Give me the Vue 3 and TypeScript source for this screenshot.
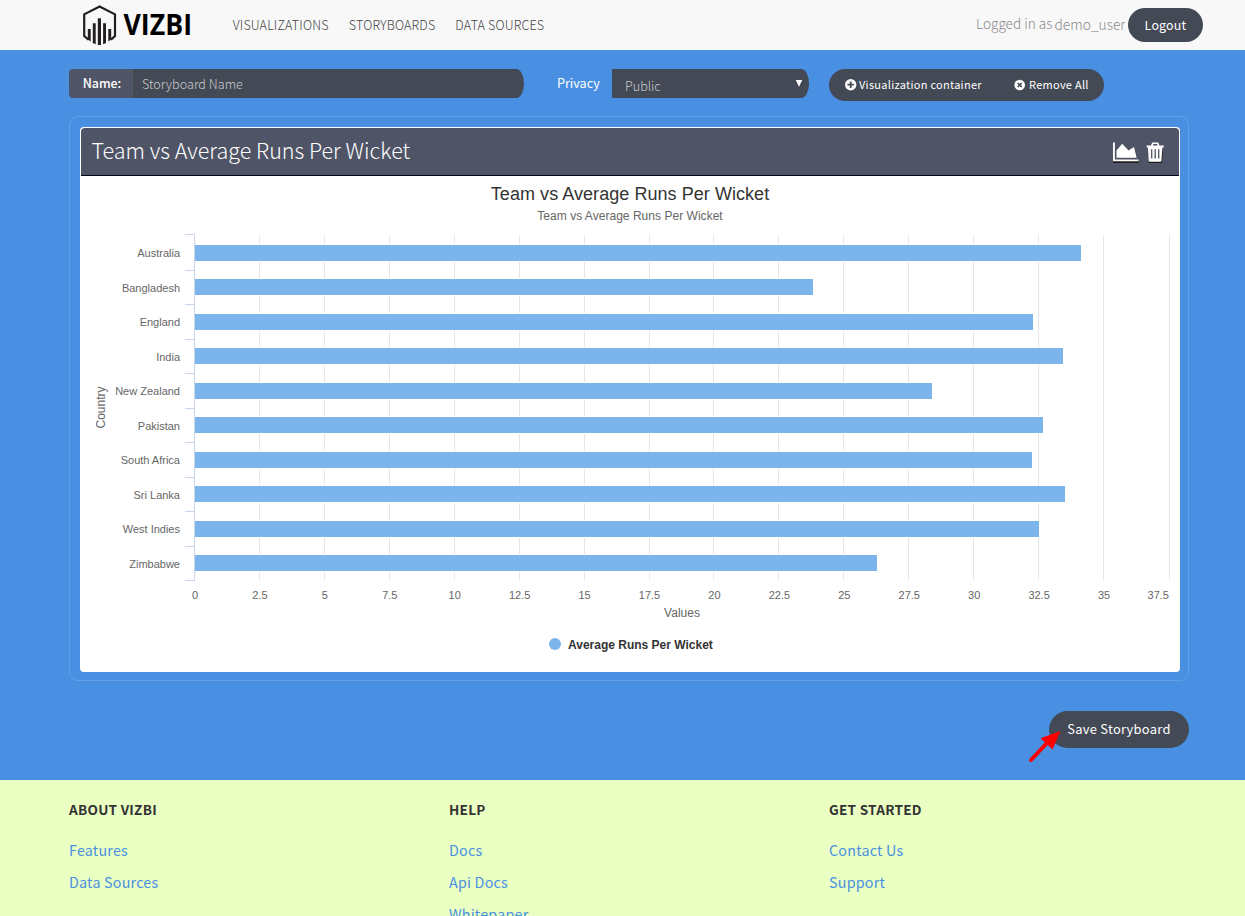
<script setup lang="ts">
interface Bar { label: string; end: number }
const bars: Bar[] = [
  { label: 'Australia', end: 1081 },
  { label: 'Bangladesh', end: 813 },
  { label: 'England', end: 1033 },
  { label: 'India', end: 1063 },
  { label: 'New Zealand', end: 932 },
  { label: 'Pakistan', end: 1043 },
  { label: 'South Africa', end: 1032 },
  { label: 'Sri Lanka', end: 1065 },
  { label: 'West Indies', end: 1039 },
  { label: 'Zimbabwe', end: 877 },
]
const barTops: number[] = [245, 279, 314, 348, 383, 417, 452, 486, 521, 555]
const categoryTicks: number[] = [234.5, 270.5, 304.5, 339.5, 373.5, 408.5, 442.5, 477.5, 511.5, 546.5, 580.5]
const gridX: number[] = [259.5, 324.5, 389.5, 454.5, 519.5, 584.5, 649.5, 713.5, 778.5, 843.5, 908.5, 973.5, 1038.5, 1103.5, 1169.5]
const valueLabels: string[] = ['0', '2.5', '5', '7.5', '10', '12.5', '15', '17.5', '20', '22.5', '25', '27.5', '30', '32.5', '35']

const footer = [
  { title: 'ABOUT VIZBI', links: ['Features', 'Data Sources'] },
  { title: 'HELP', links: ['Docs', 'Api Docs', 'Whitepaper'] },
  { title: 'GET STARTED', links: ['Contact Us', 'Support'] },
]
</script>

<template>
  <div class="page">
    <header class="topbar">
      <svg class="logo" width="112" height="50" viewBox="82 0 112 50">
        <path d="M88.5 39.6L84.2 36V14.3L99.6 6.4L115 14.3V36L111 39.6" fill="none" stroke="#231f20" stroke-width="2.2" />
        <g fill="#231f20">
          <path d="M87.8 29h2.9v12.6l-2.9-2z" />
          <path d="M92.8 23.3h2.9v21l-2.9-1.3z" />
          <path d="M97.8 18.3h3.2v26.7h-3.2z" />
          <path d="M103.1 23.3h2.9v19.7l-2.9 1.3z" />
          <path d="M108.3 29h2.9v10.6l-2.9 2z" />
        </g>
        <text class="wordmark" x="123.5" y="35.3" textLength="68.5" lengthAdjust="spacingAndGlyphs">VIZBI</text>
      </svg>
      <nav class="nav">
        <a class="nav-a">VISUALIZATIONS</a>
        <a class="nav-b">STORYBOARDS</a>
        <a class="nav-c">DATA SOURCES</a>
      </nav>
      <div class="user">
        <span class="logged">Logged in as</span>
        <span class="who">demo_user</span>
        <button class="pill logout">Logout</button>
      </div>
    </header>

    <main class="main">
      <div class="toolbar">
        <div class="name-group">
          <span class="addon">Name:</span>
          <div class="field">Storyboard Name</div>
        </div>
        <span class="privacy">Privacy</span>
        <div class="select">
          <span>Public</span>
          <svg width="8" height="8" viewBox="0 0 8 8"><path d="M.8 0h6.4L4 6.8z" fill="#fff" /></svg>
        </div>
        <div class="actions">
          <svg width="12" height="12" viewBox="0 0 12 12">
            <circle cx="5.7" cy="5.7" r="5.7" fill="#fff" />
            <path d="M5.7 2.5v6.4M2.5 5.7h6.4" stroke="#444956" stroke-width="1.8" />
          </svg>
          <span class="act-a">Visualization container</span>
          <svg width="12" height="12" viewBox="0 0 12 12">
            <circle cx="5.7" cy="6" r="5.3" fill="#fff" />
            <path d="M3.7 4l4 4M7.7 4l-4 4" stroke="#444956" stroke-width="1.7" />
          </svg>
          <span class="act-b">Remove All</span>
        </div>
      </div>

      <section class="board">
        <article class="card">
          <div class="card-head">
            <h2>Team vs Average Runs Per Wicket</h2>
            <svg class="head-icons" width="54" height="26" viewBox="1112 139 54 26">
              <g transform="translate(0 1.4)" fill="#111" opacity=".8">
                <path d="M1113 142.5h2v17h23.5v2H1113z" />
                <path d="M1148 149h15l-1 12.5h-13z" />
              </g>
              <g fill="#fff">
                <path d="M1113 142.5h1.9v17h23.6v1.8H1113z" />
                <path d="M1116.5 157.7v-7.2l5.7-6.7 6.3 6.6 5.5-3.5 2.6 10.8z" />
                <path d="M1146.7 145.6h4.2l1.3-3h6l1.3 3h4.2v2h-1.4l-.8 13.2q-.1 1-1.2 1h-10.4q-1.1 0-1.2-1l-.8-13.2h-1.2z" />
              </g>
              <path d="M1152.7 145.5l.8-1.6h3.4l.8 1.6" fill="#4f5466" />
              <path d="M1151.7 149.2v9.4M1155.2 149.2v9.4M1158.7 149.2v9.4" stroke="#4f5466" stroke-width="1.3" />
            </svg>
          </div>
          <svg class="chart" width="1098" height="495" viewBox="81 176 1098 495">
            <text class="title" x="630" y="200" text-anchor="middle" textLength="278.4">Team vs Average Runs Per Wicket</text>
            <text class="sub" x="630" y="220" text-anchor="middle" textLength="185.4">Team vs Average Runs Per Wicket</text>
            <path v-for="x in gridX" :key="x" :d="`M${x} 235V580`" stroke="#e6e6e6" />
            <path v-for="y in categoryTicks" :key="y" :d="`M185 ${y}H195`" stroke="#ccd6eb" />
            <g v-for="(b, i) in bars" :key="b.label">
              <rect x="194" :y="barTops[i] - 1" :width="b.end - 193" height="18" fill="#fff" />
              <rect x="195" :y="barTops[i]" :width="b.end - 195" height="16" fill="#7cb5ec" />
              <text class="tick" x="180" :y="257 + Math.round(i * 34.5)" text-anchor="end">{{ b.label }}</text>
            </g>
            <path d="M194.5 235V580" stroke="#ccd6eb" />
            <text v-for="(v, i) in valueLabels" :key="v" class="tick" :x="195 + i * 64.93" y="599" text-anchor="middle">{{ v }}</text>
            <text class="tick" x="1169" y="599" text-anchor="end">37.5</text>
            <text class="sub" x="682" y="617" text-anchor="middle">Values</text>
            <text class="sub" transform="translate(105 407.5) rotate(-90)" text-anchor="middle">Country</text>
            <circle cx="555" cy="644" r="6" fill="#7cb5ec" />
            <text class="legend" x="568" y="649">Average Runs Per Wicket</text>
          </svg>
        </article>
      </section>

      <div class="save-row">
        <button class="pill save">Save Storyboard</button>
        <svg class="arrow" width="34" height="34" viewBox="1028 730 34 34">
          <path d="M1031 760L1047 743" stroke="#f00" stroke-width="4" stroke-linecap="round" />
          <path d="M1060.5 731L1052.5 749.5L1040.5 738.3z" fill="#f00" />
        </svg>
      </div>
    </main>

    <footer class="footer">
      <div v-for="c in footer" :key="c.title" class="col">
        <h3>{{ c.title }}</h3>
        <a v-for="l in c.links" :key="l">{{ l }}</a>
      </div>
    </footer>
  </div>
</template>

<style>
body { margin: 0; overflow: hidden; }
</style>

<style scoped>
.page {
  width: 1245px;
  height: 916px;
  overflow: hidden;
  display: flex;
  flex-direction: column;
  font-family: "Noto Sans CJK SC", "Open Sans", sans-serif;
}
svg { display: block; flex: none; }
.logo { overflow: visible; }
span, a, h2, h3, button { white-space: nowrap; }
.topbar {
  height: 50px;
  box-sizing: border-box;
  background: #f8f8f8;
  display: flex;
  align-items: center;
  padding: 0 42px 0 82px;
  flex: none;
}
.wordmark { font: 700 28.5px "Open Sans", sans-serif; fill: #000; }
.nav { display: flex; margin-left: 38.8px; font-size: 12.5px; font-weight: 300; color: #444; line-height: 50px; letter-spacing: .18px; }
.nav-a { width: 116px; }
.nav-b { width: 106.5px; }
.user { margin-left: auto; display: flex; align-items: center; font-size: 13.8px; font-weight: 300; color: #8a8a8a; }
.logged { width: 78.5px; line-height: 24px; margin-top: -4px; font-size: 13.6px; }
.who { width: 73.5px; line-height: 24px; margin-top: -2px; }
.pill {
  border: 0;
  padding: 0 0 2px;
  background: #444956;
  color: #fff;
  font-family: inherit;
  font-weight: 400;
  text-align: center;
}
.logout { width: 75px; height: 34px; border-radius: 17px; padding-bottom: 0; font-size: 12.4px; letter-spacing: .2px; }
.main { height: 730px; background: #4990e2; flex: none; padding: 19px 56px 0 69px; box-sizing: border-box; }
.toolbar { display: flex; height: 32px; font-size: 12.6px; align-items: flex-start; }
.name-group { display: flex; width: 455px; height: 29px; line-height: 28px; }
.addon {
  width: 64px;
  box-sizing: border-box;
  padding-left: 2px;
  background: #4f5466;
  border-radius: 4px 0 0 4px;
  color: #fff;
  font-size: 12.4px;
  font-weight: 500;
  text-align: center;
}
.field { flex: 1; background: #444956; border-radius: 0 8px 8px 0 / 0 15px 15px 0; color: #ccc; font-weight: 300; padding-left: 9px; line-height: 30px; letter-spacing: .03px; }
.privacy { width: 55px; margin-left: 33px; line-height: 28px; color: #fff; }
.select {
  width: 197px;
  height: 29px;
  box-sizing: border-box;
  padding: 0 6px 0 13px;
  background: #444956;
  border-radius: 0 8px 8px 0 / 0 15px 15px 0;
  color: #ccc;
  font-weight: 300;
  line-height: 33px;
  display: flex;
  justify-content: space-between;
}
.select svg { margin-top: 11px; }
.actions {
  width: 275px;
  height: 32px;
  box-sizing: border-box;
  margin-left: 20px;
  padding-left: 16px;
  border-radius: 16px;
  background: #444956;
  color: #fff;
  display: flex;
  align-items: center;
  font-size: 11px;
  letter-spacing: .28px;
}
.actions span { line-height: 16px; padding-bottom: 2px; }
.act-a { margin-left: 2px; width: 155px; }
.act-b { margin-left: 3px; }
.board {
  width: 1120px;
  height: 565px;
  box-sizing: border-box;
  margin-top: 15px;
  padding: 10px;
  border: 1px solid #65a0e6;
  border-radius: 9px;
}
.card { width: 1100px; height: 545px; background: #fff; border-radius: 4px; overflow: hidden; box-sizing: border-box; padding: 1px; }
.card-head {
  height: 48px;
  box-sizing: border-box;
  border-bottom: 1px solid #080814;
  border-radius: 4px 4px 0 0;
  background: #4f5466;
  display: flex;
  align-items: flex-start;
  justify-content: space-between;
  padding: 0 13px 0 10.5px;
}
h2 { margin: -1px 0 0; font-size: 21.5px; font-weight: 300; color: #fff; line-height: 46px; }
.head-icons { margin-top: 11px; }
.chart { font-family: "Liberation Sans", Arial, sans-serif; }
.title { font-size: 18px; fill: #333; }
.sub { font-size: 12px; fill: #666; }
.tick { font-size: 11px; fill: #666; }
.legend { font-size: 12px; font-weight: 700; fill: #333; }
.save-row { position: relative; display: flex; justify-content: flex-end; margin-top: 30px; }
.save { width: 140px; height: 37px; border-radius: 18.5px; font-size: 12.9px; letter-spacing: .28px; }
.arrow { position: absolute; left: 959px; top: 19px; }
.footer { flex: 1; background: #eaffc2; display: flex; padding-left: 69px; }
.col { width: 380px; flex: none; }
h3 { margin: 19px 0 15px; font-size: 13.6px; line-height: 20px; font-weight: 700; color: #333; letter-spacing: .25px; }
.col a { display: block; height: 32px; line-height: 32px; font-size: 14.3px; color: #4990e2; letter-spacing: .22px; }
</style>
